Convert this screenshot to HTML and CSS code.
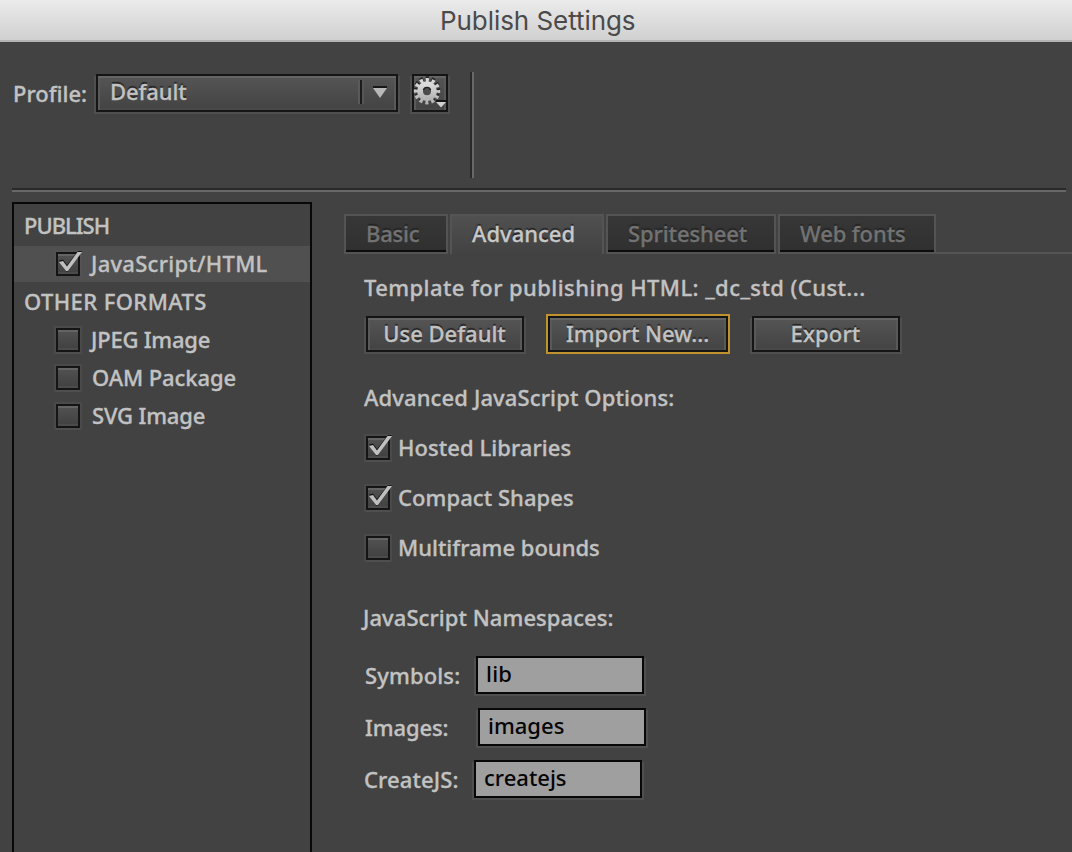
FILE: index.html
```html
<!DOCTYPE html>
<html lang="en">
<head>
<meta charset="utf-8">
<title>Publish Settings</title>
<link rel="stylesheet" href="styles.css">
</head>
<body>
<svg width="0" height="0" class="defs">
  <defs>
    <linearGradient id="metal" x1="0" y1="0" x2="0" y2="1"><stop offset="0" stop-color="#dcdcdc"/><stop offset="1" stop-color="#b4b4b4"/></linearGradient>
    <symbol id="tick" viewBox="0 0 30 30">
      <path d="M5 9.5 L9 8.5 L13 14 L24 0 L28 0 L14 20.5 L12 20.5 Z" fill="#161616"/>
      <path d="M5 11 L9 10 L13 15.5 L23.5 1 L28 1 L14 20 L12 20 Z" fill="#c0c0c0"/>
    </symbol>
  </defs>
</svg>
<header class="titlebar"><h1 class="w-title">Publish Settings</h1></header>
<section class="profile">
  <span class="profile-label w-profile">Profile:</span>
  <div class="control select">
    <span class="w-default">Default</span>
    <svg class="select-arrow" width="34" height="30" viewBox="0 0 34 30">
      <path d="M0 2h2v24h-2z" fill="#5a5a5a"/><path d="M2 2h2v24h-2z" fill="#1c1c1c"/><path d="M4 2h2v24h-2z" fill="#565656"/>
      <path d="M15 8h14v2h-14z" fill="#181818"/><path d="M15 10h14l-7 10z" fill="#b8b8b8"/>
    </svg>
  </div>
  <div class="control gear">
    <svg width="36" height="38" viewBox="412 74 36 38">
      <circle cx="427" cy="89.4" r="11.2" fill="none" stroke="#242424" stroke-width="4" stroke-dasharray="3.1 2.764" stroke-dashoffset="1.55"/>
      <circle cx="427" cy="91.2" r="11.2" fill="none" stroke="url(#metal)" stroke-width="4" stroke-dasharray="3.1 2.764" stroke-dashoffset="1.55"/>
      <circle cx="427" cy="91.2" r="7" fill="none" stroke="url(#metal)" stroke-width="6"/>
      <path d="M423.4 90.2a3.7 3.7 0 0 1 7.2 0" fill="none" stroke="#202020" stroke-width="1.4"/>
      <path d="M436 100h10v2h-10z" fill="#151515"/><path d="M436 102h10l-5 5.5z" fill="#d2d2d2"/>
    </svg>
  </div>
  <div class="divider"></div>
</section>
<div class="rule"></div>
<main class="content">
  <nav class="formats">
    <div class="row"><span class="w-publish">PUBLISH</span></div>
    <div class="row format selected"><i class="check"><svg class="tick"><use href="#tick"/></svg></i><span class="w-js">JavaScript/HTML</span></div>
    <div class="row"><span class="w-other">OTHER FORMATS</span></div>
    <div class="row format"><i class="check"></i><span class="w-jpeg">JPEG Image</span></div>
    <div class="row format"><i class="check"></i><span class="w-oam">OAM Package</span></div>
    <div class="row format"><i class="check"></i><span class="w-svg">SVG Image</span></div>
  </nav>
  <section class="panel">
    <div class="tabs">
      <div class="tab tab-basic"><span class="w-basic">Basic</span></div>
      <div class="tab active"><span>Advanced</span></div>
      <div class="tab tab-sprite"><span class="w-sprite">Spritesheet</span></div>
      <div class="tab tab-fonts"><span class="w-fonts">Web fonts</span></div>
      <div class="tab-line"></div>
    </div>
    <div class="settings">
      <p class="line template"><span class="w-template">Template for publishing HTML: _dc_std (Cust...</span></p>
      <div class="buttons">
        <div class="control button use"><span>Use Default</span></div>
        <div class="control button import"><span class="w-import">Import New...</span></div>
        <div class="control button export"><span class="w-export">Export</span></div>
      </div>
      <p class="line options"><span class="w-options">Advanced JavaScript Options:</span></p>
      <div class="option"><i class="check"><svg class="tick"><use href="#tick"/></svg></i><span class="w-hosted">Hosted Libraries</span></div>
      <div class="option"><i class="check"><svg class="tick"><use href="#tick"/></svg></i><span class="w-hosted">Compact Shapes</span></div>
      <div class="option"><i class="check"></i><span>Multiframe bounds</span></div>
      <p class="line namespaces"><span class="w-names">JavaScript Namespaces:</span></p>
      <div class="field symbols"><span class="label w-symbols">Symbols:</span><div class="input"><span class="w-lib">lib</span></div></div>
      <div class="field images"><span class="label w-images">Images:</span><div class="input"><span>images</span></div></div>
      <div class="field createjs"><span class="label w-create">CreateJS:</span><div class="input"><span>createjs</span></div></div>
    </div>
  </section>
</main>
</body>
</html>
```
FILE: styles.css
```css
* { box-sizing: border-box; }
body { margin: 0; width: 1072px; height: 852px; overflow: hidden; background: #424242; color: #c2c2c2; font: 500 22px/34px "Noto Sans", sans-serif; -webkit-text-stroke: 0.3px; white-space: nowrap; display: flex; flex-direction: column; }
.defs { position: absolute; }
p, h1 { margin: 0; }
.titlebar { height: 42px; flex: none; background: linear-gradient(#ebebeb, #d1d1d1 39px); border-bottom: 2px solid #b2b2b2; padding-left: 440px; }
.titlebar h1 { font: 400 26px/42px Inter, sans-serif; color: #4a4a4a; letter-spacing: -0.06px; -webkit-text-stroke: 0; }
.profile { height: 146px; flex: none; display: flex; align-items: flex-start; padding: 32px 0 0 13px; }
.profile-label { width: 83px; line-height: 38px; }
.control { border: 2px solid #151515; background: linear-gradient(#555, #434343); box-shadow: inset 0 2px #646464, inset 2px 0 #595959, inset -2px 0 #595959, inset 0 -2px #484848, -2px 2px 0 #4f4f4f, 2px 2px 0 #4f4f4f; text-shadow: 0 -2px 1px #242424; }
.select { width: 302px; height: 38px; padding: 0 4px 0 12px; display: flex; justify-content: space-between; line-height: 31px; }
.select-arrow { margin-top: 2px; }
.gear { width: 36px; height: 38px; margin-left: 14px; }
.gear svg { display: block; margin: -2px; }
.divider { width: 4px; height: 106px; margin: -2px 0 0 22px; border-left: 2px solid #292929; border-right: 2px solid #686868; }
.rule { flex: none; height: 4px; width: 1054px; margin-left: 12px; border-top: 2px solid #292929; border-bottom: 2px solid #686868; }
.content { flex: 1; display: flex; align-items: flex-start; }
.formats { width: 300px; height: 652px; margin: 10px 0 0 12px; border: 2px solid #080808; padding-top: 4px; display: flex; flex-direction: column; gap: 2px; }
.row { height: 36px; padding-left: 10px; flex: none; }
.format { display: flex; align-items: center; padding-left: 42px; gap: 11px; }
.format span, .option span { padding-bottom: 2px; }
.selected { background: #505050; }
.check { position: relative; flex: none; width: 24px; height: 24px; border: 2px solid #151515; background: linear-gradient(#525252, #404040); box-shadow: inset 0 2px #646464, inset 0 -2px #4b4b4b, 0 0 0 2px rgba(90,90,90,.35), 0 2px 0 #4b4b4b; }
.tick { position: absolute; left: -4px; top: -3px; width: 30px; height: 30px; }
.panel { flex: 1; margin: 22px 0 0 32px; }
.tabs { display: flex; height: 40px; }
.tab { height: 40px; border: 2px solid #545454; border-bottom: 0; text-shadow: 0 -2px 1px #242424; color: #727272; background: linear-gradient(#373737, #303030 34px, #0c0c0c 34px, #0c0c0c 36px, #545454 36px); padding-left: 20px; }
.tab-basic { width: 104px; }
.active { width: 154px; color: #c8c8c8; background: linear-gradient(#505050, #424242); margin-left: 2px; }
.tab-sprite { width: 170px; margin-left: 2px; }
.tab-fonts { width: 158px; margin-left: 2px; }
.tab-line { flex: 1; height: 2px; margin-top: 38px; background: #545454; }
.settings { padding-left: 20px; }
.line { height: 36px; }
.template { margin-top: 16px; }
.buttons { display: flex; margin: 10px 0 0 2px; }
.button { height: 36px; line-height: 30px; text-align: center; }
.button span { margin-right: 1px; }
.use { width: 158px; }
.import { width: 180px; margin-left: 24px; outline: 2px solid #c0922e; }
.export { width: 148px; margin-left: 24px; }
.options { margin-top: 28px; margin-bottom: 7px; }
.option { height: 50px; display: flex; align-items: center; gap: 8px; padding-left: 2px; }
.namespaces { margin: 27px 0 20px -1px; }
.field { display: flex; height: 38px; margin-bottom: 14px; line-height: 38px; }
.input { width: 168px; height: 38px; border: 2px solid #080808; background: #9f9f9f; color: #050505; padding-left: 8px; line-height: 31px; box-shadow: -2px 2px 0 #4f4f4f, 2px 2px 0 #4f4f4f; -webkit-text-stroke: 0; }
.symbols .label { width: 112px; }
.images .label { width: 114px; }
.createjs .label { width: 110px; }
.w-default { letter-spacing: -0.1px; }
.w-publish { letter-spacing: -1px; }
.w-js { letter-spacing: 0.27px; }
.w-other { letter-spacing: 0.4px; }
.w-jpeg { letter-spacing: -0.2px; }
.w-oam { padding-left: 1px; letter-spacing: -0.1px; }
.w-svg { padding-left: 1px; letter-spacing: -0.15px; }
.w-basic { letter-spacing: -0.2px; }
.w-sprite, .w-fonts { letter-spacing: -0.1px; }
.w-template { letter-spacing: 0.42px; }
.w-export { letter-spacing: 0.15px; }
.w-options { letter-spacing: 0.12px; }
.w-hosted { letter-spacing: 0.06px; }
.w-names { letter-spacing: 0.06px; }
.w-symbols { padding-left: 1px; letter-spacing: 0.13px; }
.w-images { padding-left: 1px; letter-spacing: -0.1px; }
.w-create { letter-spacing: 0.1px; }
.w-lib { letter-spacing: 0.2px; }
```
